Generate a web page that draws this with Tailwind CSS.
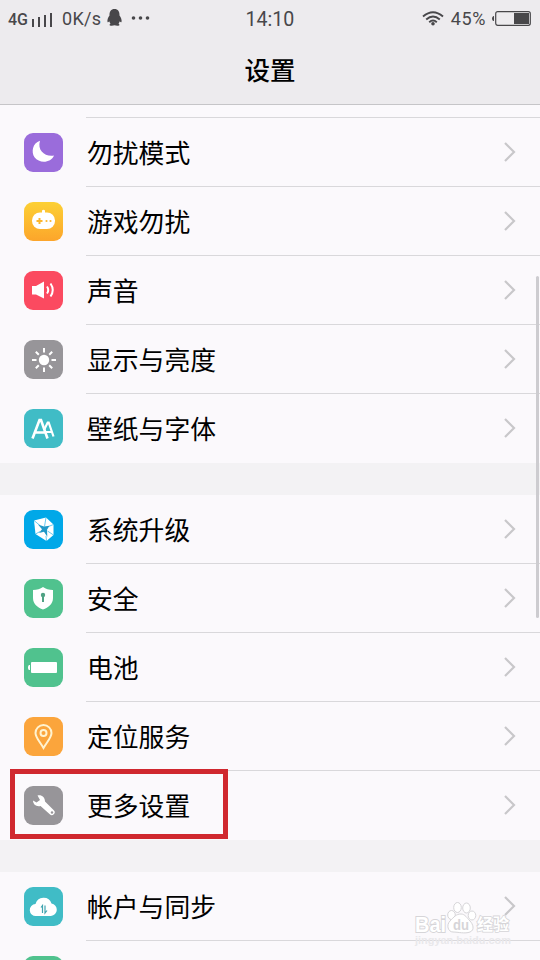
<!DOCTYPE html>
<html lang="zh-CN">
<head>
<meta charset="utf-8">
<title>设置</title>
<script src="https://cdn.jsdelivr.net/npm/@tailwindcss/browser@4"></script>
</head>
<body class="bg-[#fbf9fc] font-['Liberation_Sans','Noto_Sans_CJK_SC',sans-serif]">
<svg class="hidden"><symbol id="chev" viewBox="0 0 12 20"><path d="M1 1l9 9-9 9" fill="none" stroke="#c8c7ca" stroke-width="2.200"/></symbol></svg>
<div class="relative flex h-[960px] w-[540px] flex-col overflow-hidden">
  <header class="h-[105px] shrink-0 border-b border-[#c6c5c8] bg-[#edebee]">
    <div class="grid h-[37px] grid-cols-[1fr_auto_1fr] items-center font-['Roboto',sans-serif] text-[#48474a]">
      <div class="flex items-center pl-[8px]">
        <span class="w-[21px] pt-[3px] text-[16px] font-medium leading-none">4G</span>
        <svg class="ml-[2px] mt-[1px] h-[15px] w-[22px]" viewBox="0 0 22 15" fill="#48474a"><path d="M1 7h2v8H1zM7 5h2v10H7zM13 3h2v12h-2zM19 1h2v14h-2z"/></svg>
        <span class="ml-[9px] w-[39px] text-[18px] leading-none tracking-[0.3px]">0K/s</span>
        <svg class="ml-[6px] -mt-[2px] h-[17px] w-[15px]" viewBox="0 0 15 17" fill="#48474a"><path d="M7.500 0C4 0 2.300 2.500 2.500 6.500 1 8.500 0 11 .5 13c.4.8 1.200.1 1.700-.8.3 1 .8 1.800 1.300 2.200-1 .7-1.200 1.600-.5 2.100.8.4 3 .4 4.500-.2 1.500.6 3.700.6 4.500.2.7-.5.5-1.400-.5-2.100.5-.4 1-1.200 1.300-2.200.5.9 1.300 1.600 1.700.8.5-2-.5-4.500-2-6.500C12.700 2.500 11 0 7.500 0z"/></svg>
        <svg class="ml-[9px] -mt-[2px] h-[4px] w-[19px]" viewBox="0 0 19 4" fill="#48474a"><circle cx="2.500" cy="2" r="1.800"/><circle cx="9.500" cy="2" r="1.800"/><circle cx="16.500" cy="2" r="1.800"/></svg>
      </div>
      <span class="pt-[2px] text-[19.6px] leading-none">14:10</span>
      <div class="flex items-center justify-end pr-[9px]">
        <svg class="-mt-px h-[15px] w-[22px]" viewBox="0 0 22 15" fill="none" stroke="#48474a" stroke-width="1.900"><path d="M1 5.500Q11-3 21 5.500M4.200 8.500Q11 2.500 17.800 8.500M7.200 11.200Q11 7.800 14.800 11.200"/><circle cx="11" cy="12.800" r="1.800" fill="#48474a" stroke="none"/></svg>
        <span class="ml-[7px] pt-px text-[18px] leading-none tracking-[0.6px]">45%</span>
        <svg class="ml-[6px] h-[15px] w-[39px]" viewBox="0 0 39 15"><rect x="3.700" y=".7" width="34.600" height="13.600" rx="2" fill="none" stroke="#48474a" stroke-width="1.200"/><path d="M22 2h15v11H22zM2 5v5H1.500Q0 9.500 0 7.500T1.500 5z" fill="#48474a"/></svg>
      </div>
    </div>
    <h1 class="pt-[15px] text-center text-[25.5px] font-medium leading-[38px] text-black">设置</h1>
  </header>

  <main class="shrink-0 text-[25.8px] leading-[38px] text-black">
    <div class="ml-[86px] h-[13px] border-b border-[#d9d8db]"></div>
    <section>
      <div class="flex h-[69px] pl-[24px]">
        <svg class="mt-[15px] size-[39px] shrink-0 rounded-[9px] bg-[#9a6cdb]" viewBox="0 0 39 39"><path d="M16 7.700C8.500 10 7 19 10.500 24.300 15.500 31 27 30 30 22.500 21 24 13 17.500 16 7.700z" fill="#fff"/></svg>
        <div class="ml-[23px] flex flex-1 items-center border-b border-[#d9d8db] pr-[24px]"><span class="flex-1 pl-px pt-[4px]">勿扰模式</span><svg class="h-[20px] w-[12px]"><use href="#chev"/></svg></div>
      </div>
      <div class="flex h-[69px] pl-[24px]">
        <svg class="mt-[15px] size-[39px] shrink-0 rounded-[9px] bg-linear-to-b from-[#fcd034] to-[#fca52b]" viewBox="0 0 39 39"><path d="M18 8.500q1.500-1.500 3 0V11h-3z" fill="#fff"/><rect x="8" y="10.500" width="23" height="16.500" rx="8" fill="#fff"/><path d="M15.500 16v6M12.500 19h6" stroke="#fcb72e" stroke-width="2"/><circle cx="22.500" cy="19" r="1.100" fill="#fcb72e"/><circle cx="26.500" cy="19" r="1.100" fill="#fcb72e"/></svg>
        <div class="ml-[23px] flex flex-1 items-center border-b border-[#d9d8db] pr-[24px]"><span class="flex-1 pl-px pt-[4px]">游戏勿扰</span><svg class="h-[20px] w-[12px]"><use href="#chev"/></svg></div>
      </div>
      <div class="flex h-[69px] pl-[24px]">
        <svg class="mt-[15px] size-[39px] shrink-0 rounded-[9px] bg-[#fb4a60]" viewBox="0 0 39 39"><path d="M8 15h4l8-4.500v17L12 23.500H8z" fill="#fff"/><path d="M23 15.500q2.500 3.500 0 7M26.500 12.500q4.500 6.500 0 13" fill="none" stroke="#fff" stroke-width="2"/></svg>
        <div class="ml-[23px] flex flex-1 items-center border-b border-[#d9d8db] pr-[24px]"><span class="flex-1 pl-px pt-[4px]">声音</span><svg class="h-[20px] w-[12px]"><use href="#chev"/></svg></div>
      </div>
      <div class="flex h-[69px] pl-[24px]">
        <svg class="mt-[15px] size-[39px] shrink-0 rounded-[9px] bg-[#979599]" viewBox="0 0 39 39"><circle cx="20" cy="20" r="5.200" fill="#fff"/><path d="M20 8v4.500M20 27.500V32M8 20h4.500M27.500 20H32M11.800 11.800l3 3M25.200 25.200l3 3M28.200 11.800l-3 3M14.800 25.200l-3 3" stroke="#fff" stroke-width="2"/></svg>
        <div class="ml-[23px] flex flex-1 items-center border-b border-[#d9d8db] pr-[24px]"><span class="flex-1 pl-px pt-[4px]">显示与亮度</span><svg class="h-[20px] w-[12px]"><use href="#chev"/></svg></div>
      </div>
      <div class="flex h-[69px] pl-[24px]">
        <svg class="mt-[15px] size-[39px] shrink-0 rounded-[9px] bg-[#40bcc6]" viewBox="0 0 39 39" fill="none" stroke="#fff"><path d="M8.500 29.500L15.500 11h1.500l6.500 18.500M11 23.500h10" stroke-width="2.600"/><path d="M20 21l3.700-7.500h1L29.500 27.500M21.500 23h6" stroke-width="2.200"/></svg>
        <div class="ml-[23px] flex flex-1 items-center pb-px pr-[24px]"><span class="flex-1 pl-px pt-[4px]">壁纸与字体</span><svg class="h-[20px] w-[12px]"><use href="#chev"/></svg></div>
      </div>
    </section>
    <div class="h-[32px] bg-[#f3f2f4]"></div>
    <section>
      <div class="flex h-[69px] pl-[24px]">
        <svg class="mt-[15px] size-[39px] shrink-0 rounded-[9px] bg-[#00a8e8]" viewBox="0 0 39 39"><path d="M10 10.500L22 7.500l7.500 7V25L22.500 31 11.500 24z" fill="#fff"/><path d="M10 10.500l6 5M22 7.500l-1.500 9M29.500 14.500l-5 2M29.500 25l-6-4M22.500 31l-.5-5M11.500 24l4.500-2.500" fill="none" stroke="#00a8e8" stroke-width=".6"/><path d="M14 14.500l6 2 5.500-.8-2.500 4 .3 7-3.300-5-5 1.300 3-3.700z" fill="#2199c8"/></svg>
        <div class="ml-[23px] flex flex-1 items-center border-b border-[#d9d8db] pr-[24px]"><span class="flex-1 pl-px pt-[4px]">系统升级</span><svg class="h-[20px] w-[12px]"><use href="#chev"/></svg></div>
      </div>
      <div class="flex h-[69px] pl-[24px]">
        <svg class="mt-[15px] size-[39px] shrink-0 rounded-[9px] bg-[#50c28e]" viewBox="0 0 39 39"><path d="M19 8q4 3 10 3v8c0 6-4.500 9.500-10 11.500C13.500 28.500 9 25 9 19v-8q6 0 10-3z" fill="#fff"/><circle cx="19" cy="16" r="2.200" fill="#50a284"/><path d="M18 16h2v7h-2z" fill="#50a284"/></svg>
        <div class="ml-[23px] flex flex-1 items-center border-b border-[#d9d8db] pr-[24px]"><span class="flex-1 pl-px pt-[4px]">安全</span><svg class="h-[20px] w-[12px]"><use href="#chev"/></svg></div>
      </div>
      <div class="flex h-[69px] pl-[24px]">
        <svg class="mt-[15px] size-[39px] shrink-0 rounded-[9px] bg-[#50c28e]" viewBox="0 0 39 39" fill="#fff"><rect x="7" y="14" width="26" height="11" rx="1"/><path d="M6 17v5H5q-1-.5-1-2.500T5 17z"/></svg>
        <div class="ml-[23px] flex flex-1 items-center border-b border-[#d9d8db] pr-[24px]"><span class="flex-1 pl-px pt-[4px]">电池</span><svg class="h-[20px] w-[12px]"><use href="#chev"/></svg></div>
      </div>
      <div class="flex h-[69px] pl-[24px]">
        <svg class="mt-[15px] size-[39px] shrink-0 rounded-[9px] bg-[#fba53c]" viewBox="0 0 39 39" fill="none" stroke="#fff3d0" stroke-width="2"><path d="M19.500 31C16 25 11.500 20.500 11.500 16a8 8 0 0 1 16 0c0 4.500-4.500 9-8 15z"/><circle cx="19.500" cy="16" r="3"/></svg>
        <div class="ml-[23px] flex flex-1 items-center border-b border-[#d9d8db] pr-[24px]"><span class="flex-1 pl-px pt-[4px]">定位服务</span><svg class="h-[20px] w-[12px]"><use href="#chev"/></svg></div>
      </div>
      <div class="relative flex h-[69px] pl-[24px]">
        <svg class="mt-[15px] size-[39px] shrink-0 rounded-[9px] bg-[#979599]" viewBox="0 0 39 39"><path d="M13.500 9.500c4-1 7.500 1.500 7.500 6l8.800 8.800a2.800 2.800 0 0 1-4 4L16.500 20c-4 1-7.500-1.500-7.500-5.500l3.500 2 3.500-2.500z" fill="#fff"/><circle cx="28" cy="26.500" r="1.200" fill="#979599"/></svg>
        <div class="ml-[23px] flex flex-1 items-center pb-px pr-[24px]"><span class="flex-1 pl-px pt-[4px]">更多设置</span><svg class="h-[20px] w-[12px]"><use href="#chev"/></svg></div>
        <div class="absolute -top-[2px] left-[10px] h-[70px] w-[218px] border-5 border-[#d0282f]"></div>
      </div>
    </section>
    <div class="h-[32px] bg-[#f3f2f4]"></div>
    <section>
      <div class="flex h-[69px] pl-[24px]">
        <svg class="mt-[15px] size-[39px] shrink-0 rounded-[9px] bg-[#40bcc6]" viewBox="0 0 39 39"><path d="M12 29a6 6 0 0 1-.5-12 8.300 8.300 0 0 1 16-.5A6.300 6.300 0 0 1 27 29z" fill="#fff"/><path d="M17 20.500l1.500-2V26M21 18.500V26l2-2.500" fill="none" stroke="#40a5b0" stroke-width="1.200"/></svg>
        <div class="ml-[23px] flex flex-1 items-center border-b border-[#d9d8db] pr-[24px]"><span class="flex-1 pl-px pt-[4px]">帐户与同步</span><svg class="h-[20px] w-[12px]"><use href="#chev"/></svg></div>
      </div>
      <div class="flex h-[69px] pl-[24px]"><div class="mt-[15px] size-[39px] rounded-[9px] bg-[#50c28e]"></div></div>
    </section>
  </main>

  <div class="absolute left-[536px] top-[276px] h-[342px] w-[3px] rounded-full bg-[#cdccd0]"></div>

  <svg class="absolute left-[410px] top-[898px] h-[50px] w-[110px] font-['Liberation_Sans','Noto_Sans_CJK_SC',sans-serif]" viewBox="0 0 110 50" fill="#fff" stroke="#d6d5d8" stroke-width="1">
    <text x="5" y="34" font-size="22" font-weight="700" textLength="31" lengthAdjust="spacingAndGlyphs" stroke-width="2" paint-order="stroke">Bai</text>
    <ellipse cx="41.500" cy="17" rx="3.800" ry="4.500"/><ellipse cx="47.500" cy="9.500" rx="3.800" ry="5"/><ellipse cx="56.500" cy="10" rx="3.800" ry="5"/><ellipse cx="62" cy="17.500" rx="3.800" ry="4.500"/>
    <path d="M51 16c4 0 6 4 9 7s5 9 0 11-12 0-17 0-7-7-3-11 6-7 11-7z"/>
    <text x="43" y="32" font-size="15" font-weight="700" fill="#d6d5d8" stroke="none" textLength="16" lengthAdjust="spacingAndGlyphs">du</text>
    <text x="67" y="32" font-size="16" font-weight="700" stroke-width="1.600" paint-order="stroke">经验</text>
    <text x="5" y="46" font-size="11" font-weight="700" fill="#e9e8eb" stroke="none" textLength="96" lengthAdjust="spacingAndGlyphs">jingyan.baidu.com</text>
  </svg>
</div>
</body>
</html>
